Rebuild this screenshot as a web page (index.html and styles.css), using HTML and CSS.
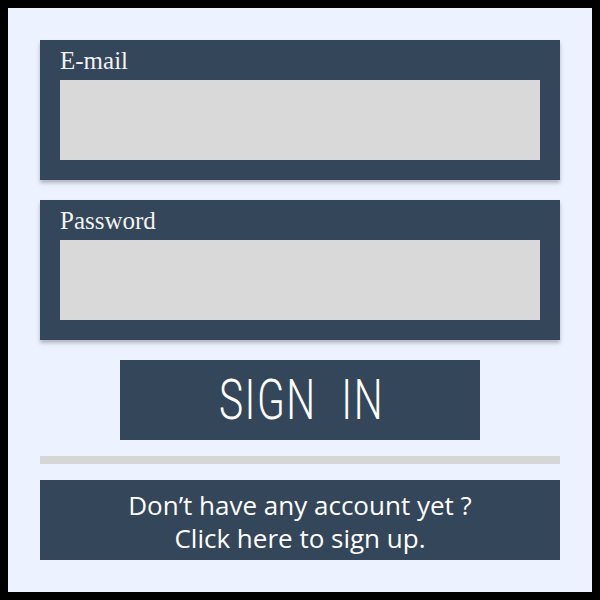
FILE: index.html
```html
<!DOCTYPE html>
<html lang="en">
<head>
    <meta charset="UTF-8">
    <meta name="viewport" content="width=device-width, initial-scale=1.0">
    <title>Sign In</title>
    <link rel="stylesheet" href="styles.css">
</head>
<body>
    <main class="login">
        <div class="field">
            <label for="email">E-mail</label>
            <input type="email" id="email">
        </div>
        <div class="field">
            <label for="password">Password</label>
            <input type="password" id="password">
        </div>
        <button class="sign-in"><span>SIGN IN</span></button>
        <hr class="divider">
        <a class="sign-up" href="#">Don’t have any account yet ?<br>Click here to sign up.</a>
    </main>
</body>
</html>
```

FILE: styles.css
```css
html {
    background-color: #000;
}
body {
    margin: 8px;
    height: 584px;
    background-color: #ecf2ff;
}
.login {
    padding: 32px;
    display: flex;
    flex-direction: column;
}
.field {
    background-color: #344659;
    padding: 0 20px 20px;
    margin-bottom: 20px;
    box-shadow: 0 3px 4px rgba(0, 0, 0, 0.25);
}
.field label {
    display: block;
    height: 40px;
    line-height: 42px;
    font-family: "Liberation Serif", serif;
    font-size: 25px;
    color: #f2f2f2;
}
.field input {
    display: block;
    width: 100%;
    height: 80px;
    box-sizing: border-box;
    border: none;
    margin: 0;
    background-color: #d9d9d9;
}
.sign-in {
    align-self: center;
    width: 360px;
    height: 80px;
    border: none;
    background-color: #344659;
    color: #fff;
    font-family: Roboto, sans-serif;
    font-weight: 300;
    font-size: 55px;
    letter-spacing: 2px;
    word-spacing: 18px;
    padding: 0 0 0 4px;
}
.sign-in span {
    display: inline-block;
    transform: scaleX(0.74);
}
.divider {
    height: 8px;
    margin: 16px 0;
    border: none;
    background-color: #d6d6d6;
}
.sign-up {
    display: block;
    height: 80px;
    background-color: #344659;
    color: #fff;
    text-decoration: none;
    text-align: center;
    font-family: "Open Sans", sans-serif;
    font-size: 26px;
    line-height: 33px;
    padding-top: 9px;
    box-sizing: border-box;
}
```
